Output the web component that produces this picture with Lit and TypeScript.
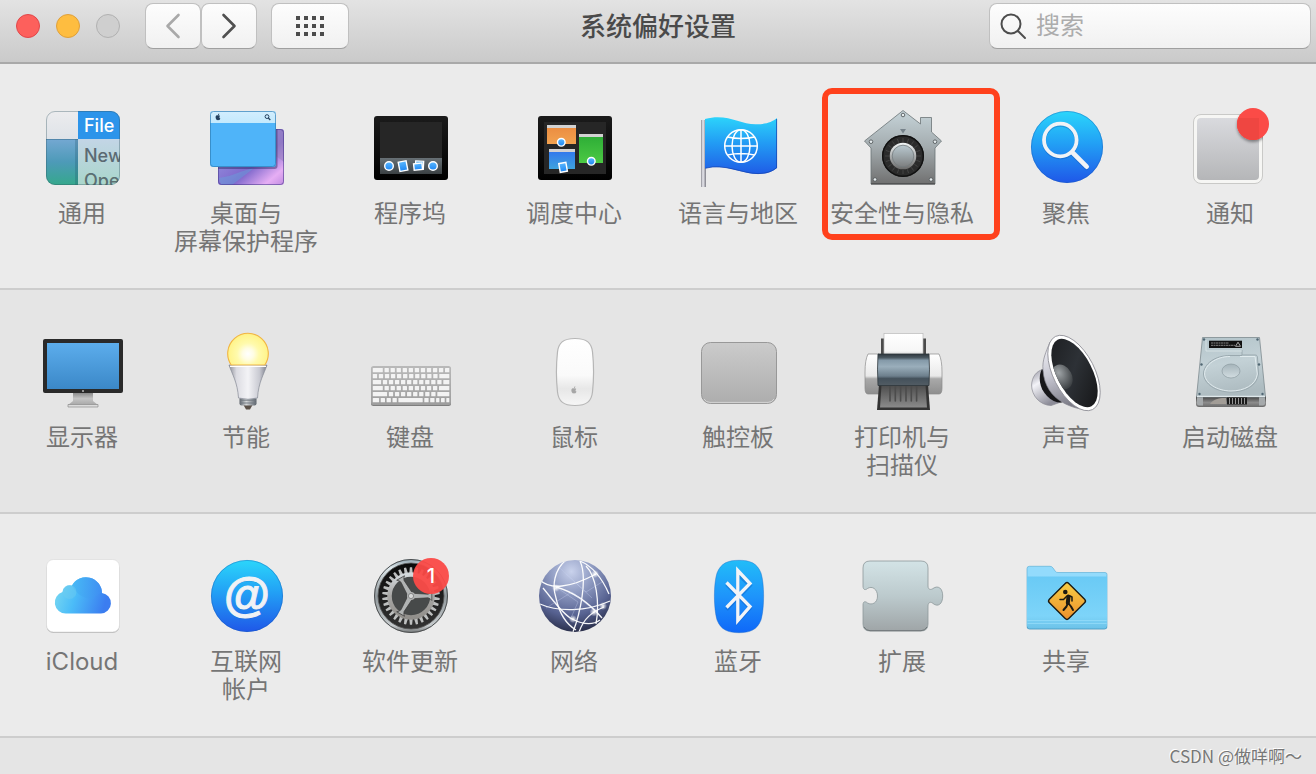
import { LitElement, html, svg, css, nothing } from "lit";
import type { SVGTemplateResult } from "lit";
import { customElement } from "lit/decorators.js";
import { classMap } from "lit/directives/class-map.js";

interface Pane {
  lines: string[];
  art: SVGTemplateResult;
  marked?: boolean;
}

const grad = (id: string, stops: [number, string][], x2 = 0, y2 = 1) => svg`
  <linearGradient id=${id} x1="0" y1="0" x2=${x2} y2=${y2}>
    ${stops.map(([o, c]) => svg`<stop offset=${o} stop-color=${c}></stop>`)}
  </linearGradient>`;

const apple = (x: number, y: number, s: number, fill: string) => svg`
  <g transform="translate(${x} ${y}) scale(${s})" fill=${fill}>
    <path d="M0-2.6C1-3.2 2.6-3.4 3.8-1.8C2-.6 2.2 1.8 4.2 2.6C3.6 4.4 2.4 6 1.4 5.8C.4 5.4-.4 5.4-1.4 5.8C-2.8 6-4.6 2.8-4.4.2C-4.2-3-1.6-3.4 0-2.6Z"></path>
    <path d="M-.1-3.4C-.2-5 1-6.2 2.2-6.4C2.4-4.8 1.2-3.4-.1-3.4Z"></path>
  </g>`;

/* ---------- first row ---------- */

const general = svg`
  <defs>
    <clipPath id="genClip"><rect x="12" y="7" width="74" height="74" rx="9"></rect></clipPath>
    ${grad("genLeft", [[0, "#74a8d2"], [0.5, "#4d9ab8"], [1, "#35a88c"]])}
    ${grad("genMenu", [[0, "#c3d5e6"], [1, "#a9d6cb"]])}
    ${grad("genTop", [[0, "#ececee"], [1, "#dfe3e8"]])}
  </defs>
  <g clip-path="url(#genClip)">
    <rect x="12" y="7" width="32" height="28" fill="url(#genTop)"></rect>
    <rect x="12" y="35" width="32" height="46" fill="url(#genLeft)"></rect>
    <rect x="41" y="35" width="3" height="46" fill="#1d4f63" opacity=".25"></rect>
    <rect x="12" y="35" width="32" height="1" fill="#3c7192" opacity=".6"></rect>
    <rect x="44" y="35" width="42" height="46" fill="url(#genMenu)"></rect>
    <rect x="44" y="7" width="42" height="28" fill="#2c94ea"></rect>
    <text class="menu-text" x="50" y="28" fill="#fff">File</text>
    <text class="menu-text" x="50" y="58" fill="#5b6a73">New</text>
    <text class="menu-text" x="50" y="83" fill="#5b6f72">Open</text>
  </g>
  <rect x="12.5" y="7.5" width="73" height="73" rx="8.5" fill="none" stroke="#32525f" stroke-opacity=".35"></rect>`;

const desktop = svg`
  <defs>
    ${grad("dtBack", [[0, "#5b4bb4"], [0.35, "#8d83d8"], [0.6, "#7e68cc"], [0.85, "#e6aef4"], [1, "#c08be0"]], 1, 1)}
    ${grad("dtBar", [[0, "#d3eefe"], [1, "#c3e9fd"]])}
    <clipPath id="dtClip"><rect x="20" y="25" width="66" height="56" rx="3"></rect></clipPath>
  </defs>
  <rect x="20" y="25" width="66" height="56" rx="3" fill="url(#dtBack)"></rect>
  <path d="M78 25h5a3 3 0 0 1 3 3v30l-8-6z" fill="#9c83c0" opacity=".6"></path>
  <g clip-path="url(#dtClip)">
    <path d="M21 74C36 72 44 66 56 64L34 81H23z" fill="#67a3dc" opacity=".45"></path>
    <rect x="13" y="9" width="66.5" height="56" rx="3" fill="#1b1c50" opacity=".4"></rect>
  </g>
  <rect x="20.5" y="25.5" width="65" height="55" rx="3" fill="none" stroke="#413388" stroke-opacity=".55"></rect>
  <rect x="12" y="7" width="66" height="56" rx="3" fill="#4fb4f9"></rect>
  <path d="M12 19V10a3 3 0 0 1 3-3h60a3 3 0 0 1 3 3v9z" fill="url(#dtBar)"></path>
  <rect x="12.5" y="7.5" width="65" height="55" rx="3" fill="none" stroke="#2f7fb8" stroke-opacity=".7"></rect>
  ${apple(20, 13, 0.55, "#24405e")}
  <circle cx="69" cy="12.6" r="1.9" fill="none" stroke="#24405e"></circle>
  <path d="M70.3 14l2 2" stroke="#24405e" stroke-width="1.2"></path>`;

const screenFrame = svg`
  <defs>${grad("frameFill", [[0, "#1b1b1b"], [1, "#000"]])}</defs>
  <rect x="12" y="12" width="74" height="64" rx="3" fill="url(#frameFill)"></rect>
  <rect x="18" y="18" width="62" height="52" fill="#262626"></rect>`;

const blueDefs = svg`<defs>${grad("dotBlue", [[0, "#5ab8ff"], [1, "#1d86f3"]])}</defs>`;
const dot = (x: number, y: number, r: number) => svg`
  <circle cx=${x} cy=${y} r=${r} fill="url(#dotBlue)" stroke="#fff" stroke-width="1.4"></circle>`;

const dock = svg`
  ${screenFrame}${blueDefs}
  <defs>${grad("dockStrip", [[0, "#677075"], [1, "#3b4144"]])}</defs>
  <rect x="18" y="54" width="62" height="16" fill="url(#dockStrip)"></rect>
  ${dot(27, 62, 4.3)}
  <rect x="37" y="57.4" width="8" height="9.4" transform="rotate(-11 41 62)" fill="url(#dotBlue)" stroke="#fff" stroke-width="1.4"></rect>
  <rect x="53.5" y="57" width="8" height="8" transform="rotate(3 57 61)" fill="#69b7ef" stroke="#fff" stroke-width="1.3"></rect>
  <rect x="51.8" y="59.5" width="8.4" height="6.4" transform="rotate(-6 56 62)" fill="url(#dotBlue)" stroke="#fff" stroke-width="1.4"></rect>
  ${dot(71, 62, 4.3)}`;

const mission = svg`
  ${screenFrame}${blueDefs}
  <defs>
    ${grad("msO", [[0, "#ea8a3f"], [1, "#f2a24f"]])}
    ${grad("msB", [[0, "#2f72ef"], [1, "#3fa3dd"]])}
    ${grad("msG", [[0, "#2bab35"], [1, "#4cc944"]])}
  </defs>
  <rect x="21" y="21" width="29" height="19" fill="url(#msO)"></rect>
  <rect x="21" y="21" width="29" height="3" fill="#d2d2d2"></rect>
  <rect x="23" y="45" width="26" height="20" fill="url(#msB)"></rect>
  <rect x="23" y="45" width="26" height="3" fill="#d2d2d2"></rect>
  <rect x="53" y="30" width="24" height="29" fill="url(#msG)"></rect>
  <rect x="53" y="30" width="24" height="3" fill="#d2d2d2"></rect>
  ${dot(35.3, 38.3, 3.8)}${dot(65.3, 57.3, 3.8)}
  <rect x="33.4" y="59" width="7.2" height="8.8" transform="rotate(-10 37 63)" fill="url(#dotBlue)" stroke="#fff" stroke-width="1.4"></rect>`;

const flag = svg`
  <defs>
    ${grad("flagBlue", [[0, "#2cd3fb"], [0.45, "#229cf4"], [1, "#1f5ce6"]])}
    ${grad("flagPole", [[0, "#8a8a92"], [0.4, "#ececf2"], [1, "#7d7d86"]], 1, 0)}
  </defs>
  <rect x="11" y="16" width="5" height="67" fill="url(#flagPole)"></rect>
  <path d="M15 15C38 9 50 21 67 20.3C77 20 82 18 87 14V64C82 68 76 70 68 70C52 70 34 59 15 64.5Z" fill="url(#flagBlue)"></path>
  <path d="M15.5 64.2C34 59 52 69.6 68 69.6C76 69.6 82 67.6 86.6 63.8V15" fill="none" stroke="#1748b4" stroke-width=".8"></path>
  <g fill="none" stroke="#fff" stroke-width="1.5">
    <circle cx="51" cy="42" r="16.3"></circle>
    <ellipse cx="51" cy="42" rx="9" ry="16.3"></ellipse>
    <path d="M51 25.7v32.6M34.7 42h32.6M37.5 33q13.5 3 27 0M37.5 51q13.5-3 27 0"></path>
  </g>`;

const ticks = Array.from({ length: 20 }, (_, i) => i * 18);
const screw = (x: number, y: number) => svg`
  <circle cx=${x} cy=${y} r="1.8" fill="#e6ecee" stroke="#575c5f" stroke-width=".9"></circle>`;

const security = svg`
  <defs>
    ${grad("houseFill", [[0, "#c6d4d9"], [0.5, "#a3abae"], [1, "#707070"]])}
    ${grad("knobFill", [[0, "#b9c9d0"], [1, "#7d7f80"]])}
    ${grad("knobRing", [[0, "#f2f6f7"], [1, "#6a6a6a"]])}
  </defs>
  <path d="M49 6.5L66.5 20V13.5H77.5V28L87.5 37L81 44V80H17V44L10.5 37Z" fill="url(#houseFill)" stroke="#6b7376" stroke-width=".8"></path>
  <path d="M17 79.8H81" stroke="#4b4b4b" stroke-width="1.2"></path>
  <path d="M49 29.5L46 25H52Z" fill="#76828a"></path>
  <circle cx="49" cy="52" r="21" fill="#2b2b2b"></circle>
  <circle cx="49" cy="52" r="20.3" fill="none" stroke="#111" stroke-width="1.4"></circle>
  <g stroke="#4d4d4d" stroke-width=".7">
    ${ticks.map((a) => svg`<path d="M49 34v4" transform="rotate(${a} 49 52)"></path>`)}
  </g>
  <circle cx="49" cy="52" r="13.3" fill="url(#knobRing)"></circle>
  <circle cx="49" cy="52" r="10.8" fill="url(#knobFill)" stroke="#737b7e" stroke-width=".8"></circle>
  ${screw(49, 11)}${screw(17, 37.7)}${screw(81, 37.7)}${screw(21, 75.5)}${screw(77, 75.5)}`;

const blueDisc = (id: string, cy: number) => svg`
  <defs>${grad(id, [[0, "#2bd6fb"], [0.45, "#22a0f5"], [1, "#1f57e8"]])}</defs>
  <circle cx="49" cy=${cy} r="36" fill="url(#${id})"></circle>
  <circle cx="49" cy=${cy} r="35.6" fill="none" stroke="#1659b5" stroke-opacity=".5" stroke-width=".8"></circle>`;

const spotlight = svg`
  ${blueDisc("spotDisc", 43)}
  <g fill="none" stroke="#1150a8" stroke-opacity=".35" transform="translate(0 1)">
    <circle cx="42.3" cy="36" r="16.3" stroke-width="4"></circle>
    <path d="M54.5 48.5L68.5 62.5" stroke-width="5" stroke-linecap="round"></path>
  </g>
  <g fill="none" stroke="#f1f3f6">
    <circle cx="42.3" cy="36" r="16.3" stroke-width="3.8"></circle>
    <path d="M54.5 48.5L68.7 62.7" stroke-width="4.6" stroke-linecap="round"></path>
  </g>`;

const notifications = svg`
  <defs>
    ${grad("noteFill", [[0, "#d9dade"], [1, "#b5b6b8"]])}
    <filter id="noteShade" x="-30%" y="-30%" width="160%" height="170%">
      <feDropShadow dx="0" dy="2" stdDeviation="1.5" flood-color="#000" flood-opacity=".4"></feDropShadow>
    </filter>
    <clipPath id="noteClip"><rect x="11" y="10" width="70" height="70" rx="8"></rect></clipPath>
  </defs>
  <rect x="11.5" y="10.5" width="69" height="69" rx="7.5" fill="#f6f6f4" stroke="#c9c9c7"></rect>
  <rect x="15" y="14" width="62" height="62" rx="4" fill="url(#noteFill)"></rect>
  <g clip-path="url(#noteClip)"><circle cx="71" cy="20" r="16" fill="#f64a45" filter="url(#noteShade)"></circle></g>
  <circle cx="71" cy="20" r="16" fill="#fb4b47"></circle>
  <path d="M55 20a16 16 0 0 0 22 14.8V14H57a16 16 0 0 0-2 6z" fill="#ef4641"></path>`;

/* ---------- second row ---------- */

const display = svg`
  <defs>
    ${grad("scr", [[0, "#5cadec"], [1, "#3b88c8"]])}
    ${grad("stand", [[0, "#8b8b8b"], [0.4, "#c4c4c4"], [1, "#9f9f9f"]])}
  </defs>
  <path d="M39 65H59V73L64 77V79H34V77L39 73Z" fill="url(#stand)"></path>
  <path d="M34 76.5H64V79H34Z" fill="#dcdcdc" stroke="#8d8d8d" stroke-width=".7"></path>
  <rect x="9" y="11" width="80" height="54" rx="2" fill="#2a2a2a"></rect>
  <rect x="13" y="15" width="72" height="46" fill="url(#scr)"></rect>
  <circle cx="49" cy="63" r="1" fill="#b5b5b5"></circle>`;

const bulb = svg`
  <defs>
    <radialGradient id="glow" gradientUnits="userSpaceOnUse" cx="50" cy="26" r="22">
      <stop offset="0" stop-color="#fff"></stop><stop offset=".25" stop-color="#fffde4"></stop>
      <stop offset=".5" stop-color="#fffaac"></stop><stop offset=".88" stop-color="#fff48c"></stop>
      <stop offset="1" stop-color="#fdd65e"></stop>
    </radialGradient>
    ${grad("bulbBody", [[0, "#8e9098"], [0.2, "#dcdce2"], [0.5, "#f3f3f6"], [0.8, "#c9cad2"], [1, "#7c7f8b"]], 1, 0)}
    ${grad("bulbCap", [[0, "#5d646c"], [0.4, "#d6d9db"], [1, "#59616a"]], 1, 0)}
  </defs>
  <path d="M45.5 77H54.5L52 81.5H48Z" fill="#5b5149"></path>
  <rect x="41.5" y="69" width="17" height="8.5" rx="2" fill="url(#bulbCap)"></rect>
  <path d="M42 72.2H58M42 75H58" stroke="#6f777f" stroke-width=".9"></path>
  <path d="M31 37H69C66 46 60.5 54 59.5 70Q50 72.5 40.5 70C39.5 54 34 46 31 37Z" fill="url(#bulbBody)" stroke="#858995" stroke-width=".7"></path>
  <path d="M33.2 37A20.3 20.3 0 1 1 66.8 37Z" fill="url(#glow)" stroke="#f1b544" stroke-width="1.1"></path>
  <path d="M32 38.3H68" stroke="#fff" stroke-width="1.2"></path>`;

const K = 4.3;
const keyRows: number[][] = [
  [10, ...Array(11).fill(K)],
  [K, ...Array(10).fill(K), 10],
  [8.3, ...Array(10).fill(K), 6],
  [10, ...Array(9).fill(K), 10.3],
  [14.3, ...Array(8).fill(K), 12],
  [6.3, K, K, K, 24.3, K, K, 3.3, 3.7, 3],
];
const keys = keyRows.map((row, r) => {
  const used = row.reduce((a, b) => a + b, 0);
  const gap = (76.5 - used) / (row.length - 1);
  let x = 10.8;
  return row.map((w) => {
    const cell = svg`<rect x=${x} y=${40 + r * 6} width=${w} height="4.2" rx=".5"></rect>`;
    x += w + gap;
    return cell;
  });
});

const keyboard = svg`
  <defs>${grad("kbBody", [[0, "#b9b9b9"], [1, "#9d9d9d"]])}</defs>
  <rect x="9" y="39" width="80" height="39" rx="2.5" fill="#7e7e7e"></rect>
  <rect x="9" y="38" width="80" height="39" rx="2.5" fill="url(#kbBody)"></rect>
  <g fill="#f3f3f3">${keys}</g>`;

const mouse = svg`
  <defs>${grad("mouseFill", [[0, "#fff"], [0.55, "#fafafa"], [0.75, "#e7e7e7"], [1, "#f6f6f6"]])}</defs>
  <path d="M49 10.5C61 10.5 65.5 15 66.5 24C67.8 36 67.8 52 66.5 64C65.5 73 61 77.5 49 77.5C37 77.5 32.5 73 31.5 64C30.2 52 30.2 36 31.5 24C32.5 15 37 10.5 49 10.5Z" fill="url(#mouseFill)" stroke="#b6b6b6" stroke-width="1.2"></path>
  ${apple(48, 62, 0.6, "#a6a6a6")}`;

const trackpad = svg`
  <defs>${grad("padFill", [[0, "#cbcbcb"], [1, "#adadad"]])}</defs>
  <rect x="11.5" y="14.5" width="75" height="61" rx="9" fill="url(#padFill)" stroke="#989898"></rect>
  <path d="M14 71q2 3.4 6 3.4H78q4 0 6-3.4" fill="none" stroke="#dedede" stroke-width=".8"></path>`;

const printer = svg`
  <defs>
    ${grad("prEnd", [[0, "#fff"], [0.55, "#e9e9e9"], [0.62, "#a9a9a9"], [1, "#8e8e8e"]])}
    ${grad("prMid", [[0, "#2e373e"], [0.12, "#4b5962"], [0.2, "#8499a8"], [0.4, "#9aaebb"], [0.7, "#6d7f8c"], [0.78, "#44515b"], [1, "#525c64"]])}
    ${grad("prTray", [[0, "#4c4c4c"], [1, "#8b8b8b"]])}
    ${grad("prPaper", [[0, "#fff"], [0.8, "#f6f6f6"], [1, "#cfcfcf"]])}
  </defs>
  <path d="M27 10.5H30V26H27ZM69 10.5H72V26H69Z" fill="#4b4b4b"></path>
  <rect x="30" y="5.5" width="39" height="22" fill="url(#prPaper)" stroke="#b9b9b9" stroke-width=".7"></rect>
  <path d="M25 26H14Q11 32 11 44V60Q11 66 14 66H25ZM74 26H85Q88 32 88 44V60Q88 66 85 66H74Z" fill="url(#prEnd)" stroke="#8b8b8b" stroke-width=".7"></path>
  <path d="M25 57H74L76 82H23Z" fill="#333"></path>
  <path d="M27.5 57H71.5L73 79.5H26Z" fill="url(#prTray)"></path>
  <g stroke="#4c4c4c" stroke-width="1.6" stroke-linecap="round">
    ${[36, 41.3, 46.6, 52, 57.3, 62.6].map((x) => svg`<path d="M${x} 58V73"></path>`)}
  </g>
  <path d="M24 26H75Q76 42 75 57.5H24Q23 42 24 26Z" fill="url(#prMid)" stroke="#2f373c" stroke-width=".8"></path>`;

const sound = svg`
  <defs>
    ${grad("coneSide", [[0, "#f6f6fa"], [0.5, "#c7c7d2"], [1, "#7d7d88"]], 0.3, 1)}
    ${grad("magnet", [[0, "#8f8f9b"], [0.4, "#f3f3f8"], [1, "#8c8c98"]], 0.5, 1)}
    ${grad("coneIn", [[0, "#17181a"], [0.6, "#2d3136"], [1, "#191a1c"]], 1, 0.4)}
    <radialGradient id="dome" cx=".45" cy=".3" r=".7">
      <stop offset="0" stop-color="#a0a5a8"></stop><stop offset="1" stop-color="#3b3f42"></stop>
    </radialGradient>
    <clipPath id="coneClip"><ellipse cx="56.5" cy="45" rx="17.8" ry="37.3" transform="rotate(-27 56.5 45)"></ellipse></clipPath>
  </defs>
  <path d="M26 41C18 43 14 49 13.6 57C13.6 68 22 77 33 77.6L43 74Z" fill="url(#magnet)" stroke="#8a8a94" stroke-width=".7"></path>
  <path d="M24 41C20 48 21 60 29 68C34 73 39 75 44 74.5L40 60Z" fill="#17171a"></path>
  <path d="M32 14C28 24 24 32 25 42C26 58 34 68 44 74C52 79 64 82 71 81.8Z" fill="url(#coneSide)" stroke="#85858f" stroke-width=".7"></path>
  <ellipse cx="56" cy="45" rx="20.7" ry="41" transform="rotate(-27 56 45)" fill="#fff" stroke="#8c8c94" stroke-width=".8"></ellipse>
  <g clip-path="url(#coneClip)">
    <rect x="20" y="5" width="70" height="80" fill="url(#coneIn)"></rect>
    <ellipse cx="44" cy="49" rx="10" ry="13" transform="rotate(-27 44 49)" fill="url(#dome)"></ellipse>
  </g>`;

const disk = svg`
  <defs>
    ${grad("hdTop", [[0, "#b3c4ca"], [0.5, "#c3d1d6"], [1, "#adbbc0"]], 0.2, 1)}
    ${grad("hdFront", [[0, "#3a3a3a"], [0.6, "#8c8c8c"], [1, "#6b6b6b"]])}
    ${grad("hdHub", [[0, "#a5b4ba"], [1, "#d2dde1"]])}
  </defs>
  <path d="M14 68H84V76Q84 79 81 79H17Q14 79 14 76Z" fill="url(#hdFront)"></path>
  <path d="M15 69H21V77.5H17Q15 77.5 15 75.5ZM77 69H83V75.5Q83 77.5 81 77.5H77Z" fill="#a5a9ab"></path>
  <path d="M28 76C32 70 40 70 44 70V76Z" fill="#a29d97"></path>
  <path d="M20.5 9.5H77.5L83.5 69H14.5Z" fill="url(#hdTop)" stroke="#7d8a8f" stroke-width=".8"></path>
  <path d="M15 68.4H83" stroke="#dfe8eb" stroke-width="1.2"></path>
  <rect x="45" y="69.5" width="20" height="7" fill="#1b1b1b"></rect>
  <path d="M47.5 70V76M50.5 70V76M53.5 70V76M56.5 70V76M59.5 70V76M62.5 70V76" stroke="#a5a5a5" stroke-width=".9"></path>
  <path d="M60 22V27H73C75 27 75.5 28 75.5 30L76.5 46C75 58 63 64 49 64C34 64 22 56 21.5 46C21.5 36 33 27.5 48 27.5H60" fill="none" stroke="#9aa9af" stroke-width="1"></path>
  <path d="M58 28.5H73L75.3 46C74 57 62 63 49 63C35 63 23 55 22.6 46C22.6 37 34 28.5 48 28.5" fill="none" stroke="#e1ebee" stroke-width="1"></path>
  <ellipse cx="49" cy="43" rx="9" ry="7" fill="url(#hdHub)" stroke="#8c9ba1" stroke-width=".7"></ellipse>
  <path d="M24 12V23H60" fill="none" stroke="#dce7ea" stroke-width=".8"></path>
  <rect x="27" y="12.7" width="33" height="7.3" fill="#111"></rect>
  <path d="M29 15H47M29 17.3H53" stroke="#8f8f8f" stroke-width=".9" stroke-dasharray="2 .5"></path>
  <path d="M53.5 18.3L56 14.2L58.5 18.3Z" fill="none" stroke="#ccc" stroke-width=".8"></path>
  ${[[22, 11.5], [75.5, 11.5], [19.5, 36.5], [77, 36.5], [17.5, 66], [80.5, 66]].map(([x, y]) => svg`
    <circle cx=${x} cy=${y} r="1.2" fill="#4f6672"></circle>`)}`;

/* ---------- third row ---------- */

const icloud = svg`
  <defs>
    ${grad("cloudFill", [[0, "#7fdcf0"], [0.45, "#4bbcf8"], [1, "#3b7df0"]], 1, 0.2)}
    ${grad("cloudBig", [[0, "#46b6f4"], [1, "#3f8ef2"]], 1, 0)}
  </defs>
  <rect x="12.5" y="9" width="73" height="72" rx="7" fill="#b9b9b9"></rect>
  <rect x="12.5" y="7.5" width="73" height="72.5" rx="7" fill="#fff" stroke="#d6d6d6" stroke-width=".6"></rect>
  <path d="M32 61.5A11 11 0 0 1 28.5 40A7.5 7.5 0 0 1 38 33.5A16 16 0 0 1 68 41A10.3 10.3 0 0 1 67 61.5Z" fill="url(#cloudFill)"></path>
  <path d="M38 33.5A16 16 0 0 1 68 41Q61 42 59 47Q45 47 38 33.5Z" fill="url(#cloudBig)" opacity=".8"></path>
  <circle cx="35.5" cy="40" r="7" fill="#6fcdf0" opacity=".45"></circle>`;

const internet = svg`
  ${blueDisc("atDisc", 44)}
  <text class="at shade" x="49" y="60">@</text>
  <text class="at" x="49" y="59">@</text>`;

const teeth = Array.from({ length: 30 }, (_, i) => i * 12);
const update = svg`
  <defs>
    ${grad("gearRim", [[0, "#8da0aa"], [0.12, "#dfe9ed"], [0.5, "#90989c"], [0.9, "#c6cbcd"], [1, "#6c6f70"]])}
    ${grad("gearFill", [[0, "#d3d9dc"], [0.5, "#a8a7a5"], [1, "#918f8b"]])}
    ${grad("gearDark", [[0, "#0a0a0a"], [1, "#333"]])}
  </defs>
  <circle cx="49" cy="44" r="37" fill="url(#gearRim)"></circle>
  <circle cx="49" cy="44" r="36.5" fill="none" stroke="#4d4f50" stroke-width="1"></circle>
  <circle cx="49" cy="44" r="33" fill="url(#gearDark)" stroke="#555" stroke-width=".8"></circle>
  <g fill="#bdbfbf">${teeth.map((a) => svg`<path d="M47.9 15.2H50.1L50.8 22H47.2Z" transform="rotate(${a} 49 44)"></path>`)}</g>
  <circle cx="49" cy="44" r="21.5" fill="#474a4a" stroke="url(#gearFill)" stroke-width="4.5"></circle>
  <g fill="#b1b4b4" stroke="#3d3d3c" stroke-width=".7">
    ${[90, 210, 330].map((a) => svg`<path d="M46.2 44L47.2 27Q46.5 24.5 44.5 23.2H53.5Q51.5 24.5 50.8 27L51.8 44Z" transform="rotate(${a} 49 44)"></path>`)}
  </g>
  <circle cx="49" cy="44" r="4" fill="#b1b4b4"></circle>
  <circle cx="49" cy="44" r="2.6" fill="#d5d8d8" stroke="#6d6d6d" stroke-width=".7"></circle>
  <circle cx="69" cy="24" r="18" fill="#fb4a47" fill-opacity=".95"></circle>
  <text class="badge" x="69" y="31">1</text>`;

const network = svg`
  <defs>
    <radialGradient id="globe" cx=".45" cy=".16" r=".88">
      <stop offset="0" stop-color="#c9d2ec"></stop><stop offset=".35" stop-color="#8d99c0"></stop>
      <stop offset=".7" stop-color="#566190"></stop><stop offset="1" stop-color="#23273f"></stop>
    </radialGradient>
    <radialGradient id="spark"><stop offset="0" stop-color="#fff"></stop><stop offset="1" stop-color="#fff" stop-opacity="0"></stop></radialGradient>
    <clipPath id="globeClip"><circle cx="49" cy="44" r="36"></circle></clipPath>
  </defs>
  <circle cx="49" cy="44" r="36" fill="url(#globe)"></circle>
  <g clip-path="url(#globeClip)" fill="none" stroke="#fff" stroke-width="1.3" stroke-opacity=".95">
    <path d="M14 28C24 38 44 36 70 22"></path>
    <path d="M40 8C28 18 26 34 30 46C33 60 40 72 50 78"></path>
    <path d="M30 35C48 40 64 52 76 66"></path>
    <path d="M54 9C62 26 54 62 47 80"></path>
    <path d="M54 9C66 14 76 26 83 42"></path>
    <path d="M14 52C32 60 60 60 84 49"></path>
    <path d="M60 14C70 24 74 50 70 72"></path>
    <path d="M53 80C58 66 66 60 78 55"></path>
    <path d="M17 36C24 44 36 62 46 67C56 72 66 74 74 68"></path>
  </g>
  <g clip-path="url(#globeClip)" fill="none" stroke="#c8d2f0" stroke-width=".7" stroke-opacity=".5">
    <path d="M30 35L52 50L44 68M40 22L60 40L76 30M20 56L46 40L70 60M34 16L66 46"></path>
  </g>
  <g fill="url(#spark)">
    <circle cx="30" cy="36" r="4"></circle><circle cx="69" cy="22" r="4"></circle>
    <circle cx="47" cy="67" r="4"></circle><circle cx="68" cy="60" r="4.5"></circle><circle cx="77" cy="54" r="4"></circle>
  </g>`;

const bluetooth = svg`
  <defs>${grad("btFill", [[0, "#22bdf8"], [0.5, "#1e94fb"], [1, "#0f68f8"]])}</defs>
  <path d="M49 8.3C60 8.3 67 11 71 21C74.5 32 74.5 56 71 68C67 78 60 80.7 49 80.7C38 80.7 31 78 27 68C23.5 56 23.5 32 27 21C31 11 38 8.3 49 8.3Z" fill="url(#btFill)" stroke="#1768c8" stroke-opacity=".6" stroke-width=".7"></path>
  <path d="M36.5 31.5L60 55L47.8 68.5V21.5L60 32.5L36.5 56.5" transform="translate(0 1)" fill="none" stroke="#0a4fb4" stroke-opacity=".35" stroke-width="3.5"></path>
  <path d="M36.5 30.5L60 54.5L47.8 68.5V18.5L60 31.5L36.5 55.5" fill="none" stroke="#f2f4f7" stroke-width="3.3"></path>`;

const puzzle = svg`
  <defs>${grad("pzFill", [[0, "#d3e3e6"], [0.5, "#bccacd"], [1, "#9fa5a7"]])}</defs>
  <path d="M16 9H67Q74 9 74 16V34C74 38 77 38 79 36.5C84 33 88.7 36 88.7 44C88.7 52 84 55.5 79 51.5C77 49.5 74 50 74 54V72Q74 79 67 79H16Q9 79 9 72V53C9 48.5 12 49.5 13.5 51C18 53.5 23.5 51 23.5 44C23.5 37 18 33.5 13.5 36.5C12 38 9 38.5 9 34V16Q9 9 16 9Z" fill="url(#pzFill)" stroke="#8d989a" stroke-width=".8"></path>
  <path d="M10 75q2 3.7 6 3.7H67q4 0 6-3.7" fill="none" stroke="#6f7678" stroke-width="1"></path>`;

const sharing = svg`
  <defs>
    ${grad("fdFront", [[0, "#6acaf5"], [0.75, "#7dd4f9"], [1, "#6cc2e8"]])}
    ${grad("signFill", [[0, "#f9cf45"], [1, "#ea8f2c"]], 1, 1)}
  </defs>
  <path d="M9 74V16.5Q9 14.3 11.5 14.3H32Q34 14.3 35 16L37.5 19.5Q38.2 20.5 40 20.5H87Q89 20.5 89 22.5V74Z" fill="#93dbfc" stroke="#62b1d8" stroke-width=".7"></path>
  <path d="M9 24.5H89V74.5Q89 77 86.5 77H11.5Q9 77 9 74.5Z" fill="url(#fdFront)"></path>
  <path d="M9.4 68.5H88.6M9.4 71.5H88.6" stroke="#94dcf9" stroke-width=".8"></path>
  <path d="M9 74.5Q9 77 11.5 77H86.5Q89 77 89 74.5" fill="none" stroke="#4b9cc4" stroke-width=".9"></path>
  <rect x="35.3" y="35.3" width="27.4" height="27.4" rx="2.5" transform="rotate(45 49 49)" fill="url(#signFill)" stroke="#1c1a12" stroke-width="1.4"></rect>
  <circle cx="47.3" cy="40" r="2.3" fill="#1c1a12"></circle>
  <g fill="none" stroke="#1c1a12" stroke-linecap="round" stroke-linejoin="round">
    <path d="M50.5 44.5L49.8 51" stroke-width="4"></path>
    <path d="M49.5 52L48.5 54.5L45.5 58M51 52L53 54.5L55 58" stroke-width="2"></path>
    <path d="M49.5 43.5L45.5 47.5H42M52 44L54 45V49" stroke-width="1.5"></path>
  </g>`;

const rows: Pane[][] = [
  [
    { lines: ["通用"], art: general },
    { lines: ["桌面与", "屏幕保护程序"], art: desktop },
    { lines: ["程序坞"], art: dock },
    { lines: ["调度中心"], art: mission },
    { lines: ["语言与地区"], art: flag },
    { lines: ["安全性与隐私"], art: security, marked: true },
    { lines: ["聚焦"], art: spotlight },
    { lines: ["通知"], art: notifications },
  ],
  [
    { lines: ["显示器"], art: display },
    { lines: ["节能"], art: bulb },
    { lines: ["键盘"], art: keyboard },
    { lines: ["鼠标"], art: mouse },
    { lines: ["触控板"], art: trackpad },
    { lines: ["打印机与", "扫描仪"], art: printer },
    { lines: ["声音"], art: sound },
    { lines: ["启动磁盘"], art: disk },
  ],
  [
    { lines: ["iCloud"], art: icloud },
    { lines: ["互联网", "帐户"], art: internet },
    { lines: ["软件更新"], art: update },
    { lines: ["网络"], art: network },
    { lines: ["蓝牙"], art: bluetooth },
    { lines: ["扩展"], art: puzzle },
    { lines: ["共享"], art: sharing },
  ],
];

@customElement("pref-row")
class PrefRow extends LitElement {
  static properties = { panes: { attribute: false } };
  declare panes: Pane[];

  static styles = css`
    :host {
      display: block;
    }
    .grid {
      display: grid;
      grid-template-columns: repeat(8, minmax(0, 1fr));
      padding: 38px 4px 32px 0;
    }
    .pane {
      position: relative;
      display: flex;
      flex-direction: column;
      align-items: center;
      gap: 8px;
      margin: 0;
      padding: 0;
      border: 0;
      background: none;
      font: inherit;
      color: inherit;
    }
    .art {
      display: block;
      width: 96px;
      height: 88px;
    }
    .label {
      min-height: 56px;
      line-height: 28px;
      white-space: nowrap;
      text-align: center;
    }
    .line {
      display: block;
    }
    .mark {
      position: absolute;
      box-sizing: border-box;
      top: -16px;
      right: -16px;
      bottom: 16px;
      left: 2px;
      border: 6px solid #ff411c;
      border-radius: 10px;
      pointer-events: none;
    }
    .menu-text {
      font: 500 18px Inter, sans-serif;
    }
    .at {
      font: 700 47px "Liberation Sans", sans-serif;
      text-anchor: middle;
      fill: #f0f2f5;
      stroke: #f0f2f5;
      stroke-width: 1px;
    }
    .shade {
      fill: #1450aa;
      stroke: none;
      fill-opacity: 0.35;
    }
    .badge {
      font: 500 20px Inter, sans-serif;
      text-anchor: middle;
      fill: #fff;
    }
  `;

  constructor() {
    super();
    this.panes = [];
  }

  render() {
    return html`<div class="grid">
      ${this.panes.map(
        (p) => html`<button class="pane" type="button">
          <svg class="art" viewBox="0 0 96 88" aria-hidden="true">${p.art}</svg>
          <span class="label">${p.lines.map((l) => html`<span class="line">${l}</span>`)}</span>
          ${p.marked ? html`<span class="mark"></span>` : nothing}
        </button>`
      )}
    </div>`;
  }
}

@customElement("app-root")
class AppRoot extends LitElement {
  static styles = css`
    :host {
      display: flex;
      flex-direction: column;
      min-height: 100vh;
      background: #e5e5e5;
      color: #757575;
      font-family: Inter, "Noto Sans CJK SC", sans-serif;
      font-size: 24px;
    }
    .toolbar {
      display: grid;
      grid-template-columns: 1fr auto 1fr;
      align-items: start;
      gap: 16px;
      padding: 3px 5px 11px;
      background: linear-gradient(#e3e3e3, #cacaca);
      border-bottom: 2px solid #a9a9a9;
    }
    .left,
    .lights,
    .nav {
      display: flex;
      align-items: center;
    }
    .lights {
      gap: 16px;
      margin: 0 25px 0 11px;
    }
    .light {
      box-sizing: border-box;
      width: 24px;
      height: 24px;
      padding: 0;
      border: 1px solid #b1b1b1;
      border-radius: 50%;
      background: #cfcfcf;
    }
    .close {
      background: #fd605c;
      border-color: #e1474a;
    }
    .mini {
      background: #febd40;
      border-color: #dfa03b;
    }
    .nav {
      margin-right: 14px;
    }
    .tool,
    .search {
      box-sizing: border-box;
      height: 46px;
      border: 1px solid #c0c0c0;
      border-bottom-color: #a0a0a0;
      border-radius: 8px;
      background: linear-gradient(#fdfdfd, #f1f1f1);
    }
    .tool {
      display: flex;
      align-items: center;
      justify-content: center;
      width: 56px;
      padding: 0;
    }
    .wide {
      width: 78px;
    }
    .title {
      margin: 0;
      font-size: 26px;
      font-weight: 500;
      line-height: 48px;
      color: #4a4a4a;
    }
    .search {
      display: flex;
      align-items: center;
      gap: 8px;
      justify-self: end;
      width: 322px;
      padding: 0 10px;
    }
    .search svg,
    .tool svg {
      flex: none;
      display: block;
    }
    .field {
      flex: 1;
      min-width: 0;
      padding: 0;
      border: 0;
      outline: 0;
      background: none;
      font: inherit;
      line-height: 32px;
      color: #4a4a4a;
    }
    .field::placeholder {
      color: #acacac;
      opacity: 1;
    }
    .panes {
      padding-top: 2px;
      background: #ebebeb;
    }
    .band {
      border-bottom: 2px solid #cdcdcd;
    }
    .shaded {
      background: #e5e5e5;
    }
    .footer {
      flex: 1;
      display: flex;
      justify-content: flex-end;
      align-items: center;
      padding: 0 14px;
      font: 17px/26px "Noto Sans CJK SC", sans-serif;
      color: #777;
      text-shadow: -1px -1px 0 #fff;
    }
  `;

  render() {
    return html`
      <header class="toolbar">
        <div class="left">
          <div class="lights">
            <button class="light close" type="button" aria-label="关闭"></button>
            <button class="light mini" type="button" aria-label="最小化"></button>
            <button class="light" type="button" aria-label="缩放" disabled></button>
          </div>
          <div class="nav">
            <button class="tool" type="button" aria-label="后退">
              <svg width="16" height="26" viewBox="0 0 16 26" fill="none" stroke="#a9a9a9" stroke-width="2.6" stroke-linecap="round" stroke-linejoin="round"><path d="M13.5 2L2.5 13L13.5 24"></path></svg>
            </button>
            <button class="tool" type="button" aria-label="前进">
              <svg width="16" height="26" viewBox="0 0 16 26" fill="none" stroke="#505050" stroke-width="2.6" stroke-linecap="round" stroke-linejoin="round"><path d="M2.5 2L13.5 13L2.5 24"></path></svg>
            </button>
          </div>
          <button class="tool wide" type="button" aria-label="显示全部">
            <svg width="28" height="20" viewBox="0 0 28 20" fill="#4c4c4c">
              ${[0, 8, 16].map((y) => [0, 8, 16, 24].map((x) => svg`<rect x=${x} y=${y} width="4" height="4"></rect>`))}
            </svg>
          </button>
        </div>
        <h1 class="title">系统偏好设置</h1>
        <label class="search">
          <svg width="28" height="28" viewBox="0 0 28 28" fill="none" stroke="#4d4d4d" stroke-width="2" stroke-linecap="round" aria-hidden="true"><circle cx="11" cy="12" r="9.5"></circle><path d="M18 19L25 26"></path></svg>
          <input class="field" type="search" placeholder="搜索" aria-label="搜索" />
        </label>
      </header>
      <main class="panes">
        ${rows.map(
          (r, i) => html`<section class=${classMap({ band: true, shaded: i === 1 })}>
            <pref-row .panes=${r}></pref-row>
          </section>`
        )}
      </main>
      <footer class="footer">CSDN @做咩啊～</footer>
    `;
  }
}
